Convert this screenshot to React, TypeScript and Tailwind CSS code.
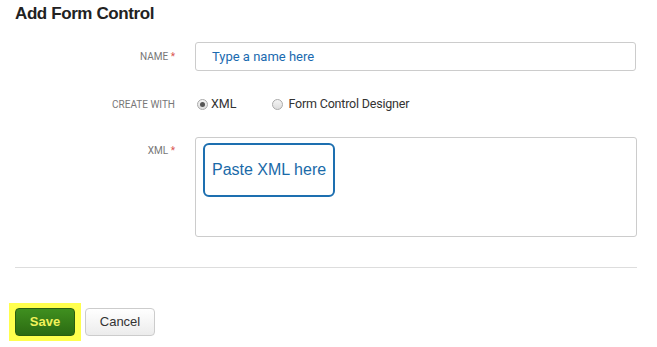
export default function App() {
  return (
    <div className="w-[657px] h-[347px] bg-white overflow-hidden font-['Roboto',sans-serif]">
      <div className="px-[15px]">
        <h1 className="pt-[3px] text-[17px] leading-[22px] font-bold tracking-[-0.4px] text-[#222] font-['Liberation_Sans',Arial,sans-serif]">
          Add Form Control
        </h1>

        <div className="mt-[17px] flex items-center">
          <label className="w-[160px] shrink-0 text-right text-[10px] uppercase text-[#777]">
            Name <span className="text-[#d9534f]">*</span>
          </label>
          <div className="ml-[20px] w-[441px] h-[29px] border border-[#ccc] rounded-[3px] flex items-center pl-[16px] text-[13px] text-[#1a6ab0]">
            Type a name here
          </div>
        </div>

        <div className="mt-[24px] flex items-center h-[18px]">
          <label className="w-[160px] shrink-0 text-right text-[10px] uppercase text-[#777]">
            Create with
          </label>
          <div className="ml-[22px] flex items-center text-[12.5px] text-[#333]">
            <span className="w-[11px] h-[11px] rounded-full border border-[#aaa] bg-gradient-to-b from-[#f4f4f4] to-[#ddd] flex items-center justify-center">
              <span className="w-[5px] h-[5px] rounded-full bg-[#555]" />
            </span>
            <span className="ml-[3px]">XML</span>
            <span className="ml-[36px] w-[11px] h-[11px] rounded-full border border-[#aaa] bg-gradient-to-b from-[#f4f4f4] to-[#ddd]" />
            <span className="ml-[5px] tracking-[-0.2px]">Form Control Designer</span>
          </div>
        </div>

        <div className="mt-[24px] flex items-start">
          <label className="w-[160px] shrink-0 pt-[6px] text-right text-[10px] uppercase text-[#777]">
            XML <span className="text-[#d9534f]">*</span>
          </label>
          <div className="ml-[20px] w-[442px] h-[100px] border border-[#ccc] rounded-[3px] pt-[5px] pl-[7px]">
            <div className="inline-flex items-center h-[54px] px-[7px] border-2 border-[#1d6fb0] rounded-[6px] text-[16px] text-[#1a6aa8] font-['Liberation_Sans',Arial,sans-serif]">
              Paste XML here
            </div>
          </div>
        </div>

        <div className="mt-[30px] h-px bg-[#ddd] w-[622px]" />

        <div className="mt-[35px] flex items-center">
          <div className="-ml-[6px] bg-[#ffff4d] px-[6px] py-[5px]">
            <button className="w-[60px] h-[28px] rounded-[4px] border border-[#2a5e10] bg-gradient-to-b from-[#3f8f1f] to-[#2c6b12] text-[13px] font-bold text-[#f2f25a] font-['Liberation_Sans',Arial,sans-serif]">
              Save
            </button>
          </div>
          <button className="ml-[4px] w-[70px] h-[28px] rounded-[4px] border border-[#ccc] bg-gradient-to-b from-white to-[#ececec] text-[13px] text-[#333] font-['Liberation_Sans',Arial,sans-serif]">
            Cancel
          </button>
        </div>
      </div>
    </div>
  );
}
